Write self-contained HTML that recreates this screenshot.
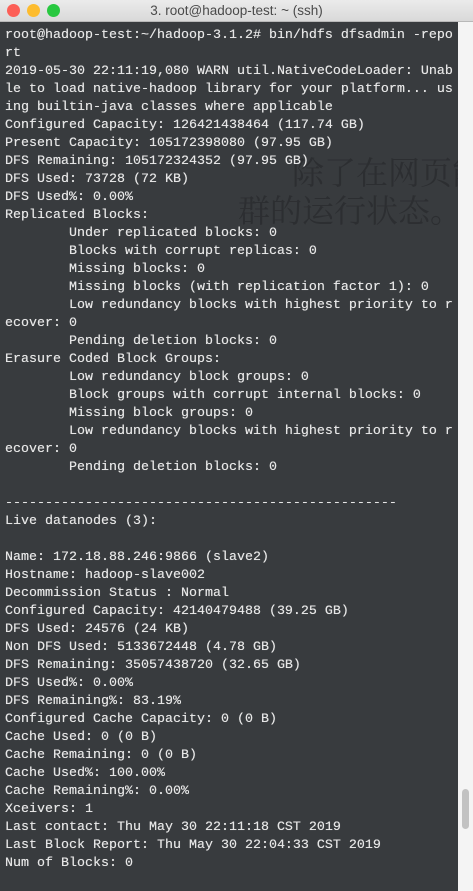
<!DOCTYPE html>
<html><head><meta charset="utf-8"><style>
html,body{margin:0;padding:0}
body{width:473px;height:891px;overflow:hidden;background:#383b3e;position:relative;font-family:"Liberation Mono",monospace}
.tb{position:absolute;left:0;top:0;width:473px;height:22px;background:linear-gradient(#ebebeb,#d9d9d9);border-bottom:1px solid #b8b8b8;box-sizing:border-box}
.tb .t{position:absolute;left:0;right:0;top:3px;text-align:center;font:13.5px "Liberation Sans",sans-serif;color:#4a4a4a}
.d{position:absolute;top:4px;width:13px;height:13px;border-radius:50%}
.sb{position:absolute;left:458px;top:22px;width:15px;height:869px;background:#f4f4f4}
.th{position:absolute;left:462px;top:789px;width:7px;height:40px;border-radius:4px;background:#c2c2c2}
pre{position:absolute;left:5px;top:27px;margin:0;font:13.33px/18px "Liberation Mono",monospace;color:#e6e6e6;white-space:pre;text-shadow:0 0 0.4px #e6e6e6}
.g{position:absolute;color:#2c2e31;font:32px "Noto Serif CJK SC",serif;white-space:nowrap}
</style></head><body>
<div class="g" style="left:292px;top:148px">除了在网页能</div>
<div class="g" style="left:238px;top:186px">群的运行状态。</div>
<div class="tb"><div class="d" style="left:7px;background:#fc5f57"></div><div class="d" style="left:27px;background:#fdbc2e"></div><div class="d" style="left:47px;background:#28c840"></div><div class="t">3. root@hadoop-test: ~ (ssh)</div></div>
<div class="sb"></div><div class="th"></div>
<pre>root@hadoop-test:~/hadoop-3.1.2# bin/hdfs dfsadmin -repo
rt
2019-05-30 22:11:19,080 WARN util.NativeCodeLoader: Unab
le to load native-hadoop library for your platform... us
ing builtin-java classes where applicable
Configured Capacity: 126421438464 (117.74 GB)
Present Capacity: 105172398080 (97.95 GB)
DFS Remaining: 105172324352 (97.95 GB)
DFS Used: 73728 (72 KB)
DFS Used%: 0.00%
Replicated Blocks:
        Under replicated blocks: 0
        Blocks with corrupt replicas: 0
        Missing blocks: 0
        Missing blocks (with replication factor 1): 0
        Low redundancy blocks with highest priority to r
ecover: 0
        Pending deletion blocks: 0
Erasure Coded Block Groups:
        Low redundancy block groups: 0
        Block groups with corrupt internal blocks: 0
        Missing block groups: 0
        Low redundancy blocks with highest priority to r
ecover: 0
        Pending deletion blocks: 0

-------------------------------------------------
Live datanodes (3):

Name: 172.18.88.246:9866 (slave2)
Hostname: hadoop-slave002
Decommission Status : Normal
Configured Capacity: 42140479488 (39.25 GB)
DFS Used: 24576 (24 KB)
Non DFS Used: 5133672448 (4.78 GB)
DFS Remaining: 35057438720 (32.65 GB)
DFS Used%: 0.00%
DFS Remaining%: 83.19%
Configured Cache Capacity: 0 (0 B)
Cache Used: 0 (0 B)
Cache Remaining: 0 (0 B)
Cache Used%: 100.00%
Cache Remaining%: 0.00%
Xceivers: 1
Last contact: Thu May 30 22:11:18 CST 2019
Last Block Report: Thu May 30 22:04:33 CST 2019
Num of Blocks: 0</pre>
</body></html>
